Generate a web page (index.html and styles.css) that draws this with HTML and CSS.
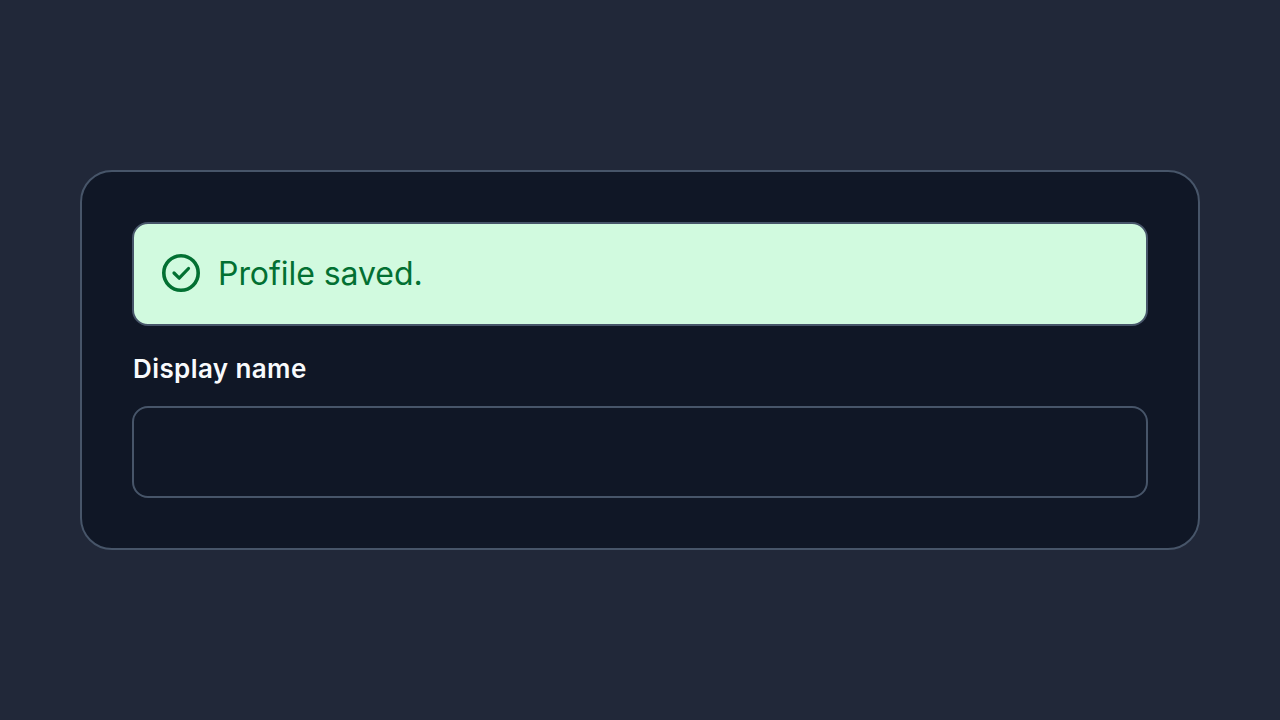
FILE: index.html
```html
<!DOCTYPE html>
<html lang="en">
<head>
  <meta charset="UTF-8">
  <title>Profile</title>
  <link rel="stylesheet" href="styles.css">
</head>
<body>

<form class="card">
  <div class="alert">
    <svg class="alert-icon" viewBox="0 0 40 40" fill="none" stroke="currentColor" stroke-linecap="round" stroke-linejoin="round">
      <circle cx="20" cy="20" r="17.2" stroke-width="3.6"/>
      <path d="M13 20l5.2 5.2L27.5 15.5" stroke-width="3.2"/>
    </svg>
    <span>Profile saved.</span>
  </div>
  <label class="field-label" for="display-name">Display name</label>
  <input class="field-input" id="display-name" type="text">
</form>

</body>
</html>
```

FILE: styles.css
```css
* { box-sizing: border-box; }
body { margin:0; height:100vh; padding:0 80px; display:flex; align-items:center; background:#212839; font-family:Inter, "Noto Sans", sans-serif; }
.card { width:100%; height:380px; padding:50px; background:#101726; border:2px solid #475569; border-radius:32px; }
.alert { display:flex; align-items:center; gap:17px; height:104px; padding:0 27px 2px; background:#d1fadf; border:2px solid #475569; border-radius:16px; color:#027032; font-size:32px; letter-spacing:-.05px; }
.alert-icon { width:40px; height:40px; flex:none; }
.field-label { display:block; margin-top:25px; height:35px; line-height:35px; padding-left:1px; color:#f8fafc; font-size:26px; font-weight:600; letter-spacing:.4px; }
.field-input { display:block; width:100%; height:92px; margin-top:20px; background:#101726; border:2px solid #475569; border-radius:16px; }
```
